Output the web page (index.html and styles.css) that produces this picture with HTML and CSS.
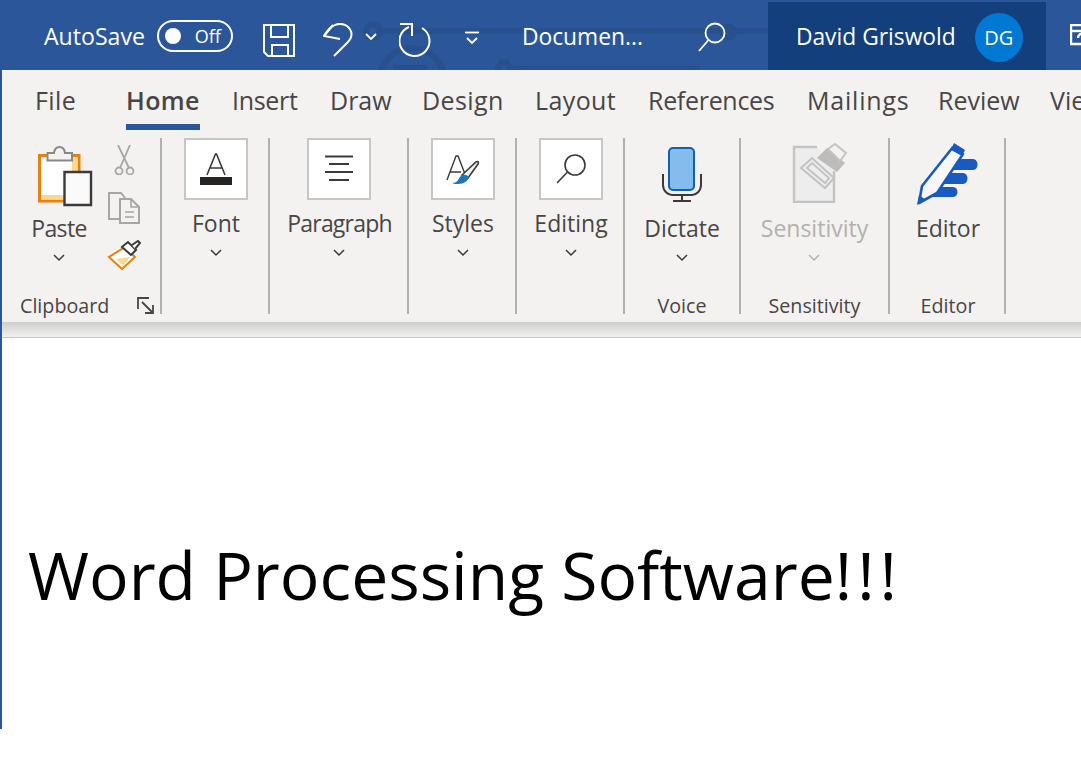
FILE: index.html
```html
<!DOCTYPE html>
<html lang="en">
<head>
    <meta charset="UTF-8">
    <title>Document - Word</title>
    <link rel="stylesheet" href="styles.css">
</head>
<body>

<div class="window">
    <header class="titlebar">
        <!-- faint circuit pattern behind the title bar -->
        <svg class="pattern" width="1081" height="70" viewBox="0 0 1081 70">
            <g fill="none" stroke="#28508f" stroke-width="6">
                <circle cx="373" cy="31" r="7"/>
                <path d="M380 31H768"/>
                <circle cx="728" cy="32" r="6"/>
                <circle cx="412" cy="80" r="32"/>
                <circle cx="504" cy="68" r="6"/>
                <path d="M510 69H700"/>
            </g>
            <path d="M393 65h34v5h-34z" fill="#28508f"/>
        </svg>
        <span class="autosave">AutoSave</span>
        <span class="toggle"><i class="knob"></i>Off</span>
        <svg class="qat qat-save" width="32" height="34" viewBox="0 0 32 34" fill="none" stroke="#fff" stroke-width="2">
            <path d="M1 2H31V33H5L1 29Z"/>
            <path d="M8 2V14H25V2"/>
            <path d="M9 33V22H25V33"/>
        </svg>
        <svg class="qat qat-undo" width="30" height="34" viewBox="0 0 30 34" fill="none" stroke="#fff" stroke-width="2">
            <path d="M10 2L1 13L17 16"/>
            <path d="M1 13C8 0 18 -1 24 3C30 8 30 14 24 20L11 33"/>
        </svg>
        <svg class="chev-sm" width="12" height="8" viewBox="0 0 12 8" fill="none" stroke="#fff" stroke-width="1.8"><path d="M1 1L6 6L11 1"/></svg>
        <svg class="qat qat-redo" width="32" height="34" viewBox="0 0 32 34" fill="none" stroke="#fff" stroke-width="2">
            <path d="M1 1H13V13"/>
            <path d="M10 4A15 15 0 1 0 23 5"/>
        </svg>
        <svg class="qat qat-more" width="14" height="16" viewBox="0 0 14 16" fill="none" stroke="#fff" stroke-width="1.8">
            <path d="M0 1.5H14"/><path d="M2 7L7 12L12 7"/>
        </svg>
        <span class="doc-name">Documen...</span>
        <svg class="qat qat-search" width="28" height="30" viewBox="0 0 28 30" fill="none" stroke="#fff" stroke-width="1.8">
            <circle cx="17" cy="11" r="9.5"/><path d="M10.5 18L1 29"/>
        </svg>
        <div class="account">
            <span class="account-name">David Griswold</span>
            <span class="avatar">DG</span>
        </div>
        <svg class="qat qat-share" width="20" height="22" viewBox="0 0 20 22" fill="none" stroke="#fff" stroke-width="2.4">
            <path d="M20 1H1V20H20"/><path d="M1 7H20"/><path d="M8 14C8 11 10 9 16 9"/>
        </svg>
    </header>

    <section class="ribbon">
        <nav class="tabs">
            <span class="tab-cell"><a class="tab tab-wide">File</a></span>
            <span class="tab-cell"><a class="tab tab-active">Home</a></span>
            <span class="tab-cell"><a class="tab tab-narrow">Insert</a></span>
            <span class="tab-cell"><a class="tab">Draw</a></span>
            <span class="tab-cell"><a class="tab tab-wide">Design</a></span>
            <span class="tab-cell"><a class="tab tab-wide">Layout</a></span>
            <span class="tab-cell"><a class="tab tab-narrow">References</a></span>
            <span class="tab-cell"><a class="tab tab-wider">Mailings</a></span>
            <span class="tab-cell"><a class="tab">Review</a></span>
            <span class="tab-cell"><a class="tab">View</a></span>
        </nav>

        <div class="groups">
            <div class="group group-clipboard">
                <div class="clip-top">
                    <div class="big-btn paste-btn">
                        <div class="icon-slot">
                            <svg class="paste-icon" width="58" height="62" viewBox="0 0 58 62">
                                <path d="M3.5 9.5H43V55H3.5Z" fill="#fff" stroke="#e8800e" stroke-width="3"/>
                                <path d="M36 11H41.500V38H36Z" fill="#fbd88c"/>
                                <path d="M5 49H29V53.500H5Z" fill="#fbd88c"/>
                                <path d="M11.500 14.500V7H18C19 -1 28 -1 29 7H36V14.500Z" fill="#f3f2f1" stroke="#8a8886" stroke-width="2"/>
                                <path d="M28.500 26H55V59H28.500Z" fill="#fafafa" stroke="#3b3a39" stroke-width="2.400"/>
                            </svg>
                        </div>
                        <span class="btn-label label-tight">Paste</span>
                        <svg class="chev" width="12" height="8" viewBox="0 0 12 8"><path d="M1 1L6 6L11 1"/></svg>
                    </div>
                    <div class="clip-side">
                        <svg width="22" height="30" viewBox="0 0 22 30" fill="none" stroke="#a8a6a4" stroke-width="1.800">
                            <path d="M5 0L16 23M17 0L7 23"/>
                            <circle cx="6" cy="26" r="3.500"/><circle cx="17" cy="26" r="3.500"/>
                        </svg>
                        <svg width="34" height="33" viewBox="0 0 34 33" fill="none" stroke="#a8a6a4" stroke-width="2">
                            <path d="M12 28H2V2H14L18 7"/>
                            <path d="M13 8H24L32 16V32H13Z" fill="#f3f2f1"/>
                            <path d="M24 8V16H32" stroke-width="1.600"/>
                            <path d="M18 21H27M18 26H27" stroke-width="1.600"/>
                        </svg>
                        <svg width="34" height="30" viewBox="0 0 34 30">
                            <path d="M2 17L15 29L28 17L18 7Z" fill="#fff" stroke="#e8800e" stroke-width="2"/>
                            <path d="M9 19L23 17L16 26Z" fill="#fbd88c"/>
                            <path d="M15 7L21 2L29 10L24 15Z" fill="#fff" stroke="#3b3a39" stroke-width="2"/>
                            <path d="M25 5L31 1L33 3L28 9" fill="#fff" stroke="#3b3a39" stroke-width="2"/>
                        </svg>
                    </div>
                </div>
                <div class="group-name">Clipboard
                    <svg class="launcher" width="17" height="17" viewBox="0 0 17 17" fill="none" stroke="#484644" stroke-width="1.800">
                        <path d="M1 12V1H12"/><path d="M5 5L15 15M16 8V16H8"/>
                    </svg>
                </div>
            </div>

            <div class="group group-font">
                <div class="collapsed">
                    <span class="tile">
                        <svg width="34" height="34" viewBox="0 0 34 34">
                            <path d="M8 23L16.500 2H17.500L26 23M11 16H23" fill="none" stroke="#3b3a39" stroke-width="1.600"/>
                            <path d="M1 25H33V33H1Z" fill="#252423"/>
                        </svg>
                    </span>
                    <span class="btn-label">Font</span>
                    <svg class="chev" width="12" height="8" viewBox="0 0 12 8"><path d="M1 1L6 6L11 1"/></svg>
                </div>
            </div>

            <div class="group group-paragraph">
                <div class="collapsed">
                    <span class="tile">
                        <svg width="30" height="28" viewBox="0 0 30 28" stroke="#3b3a39" stroke-width="2">
                            <path d="M1 1.500H29M5 9H25M1 17H29M5 25H25"/>
                        </svg>
                    </span>
                    <span class="btn-label label-para">Paragraph</span>
                    <svg class="chev" width="12" height="8" viewBox="0 0 12 8"><path d="M1 1L6 6L11 1"/></svg>
                </div>
            </div>

            <div class="group group-styles">
                <div class="collapsed">
                    <span class="tile">
                        <svg width="34" height="32" viewBox="0 0 34 32">
                            <path d="M1 27L10 3H12L19 21M4 19H15" fill="none" stroke="#3b3a39" stroke-width="1.400"/>
                            <path d="M16 22L30 9C32 8 33 9 32 11L22 25Z" fill="#f3f2f1" stroke="#3b3a39" stroke-width="1.600"/>
                            <path d="M6 30C11 30 12 27 14 24C16 21 20 21 23 24C22 28 18 31 12 31C10 31 8 31 6 30Z" fill="#1b75bc"/>
                        </svg>
                    </span>
                    <span class="btn-label">Styles</span>
                    <svg class="chev" width="12" height="8" viewBox="0 0 12 8"><path d="M1 1L6 6L11 1"/></svg>
                </div>
            </div>

            <div class="group group-editing">
                <div class="collapsed">
                    <span class="tile">
                        <svg width="32" height="32" viewBox="0 0 32 32" fill="none" stroke="#3b3a39" stroke-width="1.600">
                            <circle cx="20" cy="12" r="10"/><path d="M12.500 19L2 30"/>
                        </svg>
                    </span>
                    <span class="btn-label">Editing</span>
                    <svg class="chev" width="12" height="8" viewBox="0 0 12 8"><path d="M1 1L6 6L11 1"/></svg>
                </div>
            </div>

            <div class="group group-voice">
                <div class="big-btn">
                    <div class="icon-slot">
                        <svg class="mic-icon" width="40" height="56" viewBox="0 0 40 56">
                            <rect x="7" y="2" width="25" height="42" rx="4" fill="#85bcee" stroke="#0f62ae" stroke-width="2"/>
                            <path d="M1 28V39C1 45 6 49 10 49H30C34 49 39 45 39 39V28" fill="none" stroke="#3b3a39" stroke-width="2"/>
                            <path d="M20 49V55M11 55H29" fill="none" stroke="#3b3a39" stroke-width="2"/>
                        </svg>
                    </div>
                    <span class="btn-label">Dictate</span>
                    <svg class="chev" width="12" height="8" viewBox="0 0 12 8"><path d="M1 1L6 6L11 1"/></svg>
                </div>
                <div class="group-name">Voice</div>
            </div>

            <div class="group group-sensitivity">
                <div class="big-btn is-disabled">
                    <div class="icon-slot">
                        <svg class="sens-icon" width="56" height="60" viewBox="0 0 56 60">
                            <path d="M25 4H2V59H42V28L25 4Z" fill="#eeeded"/>
                            <path d="M25 4H2V59H42V28" fill="none" stroke="#c4c3c2" stroke-width="2.400"/>
                            <path d="M9 25L20 15L42 35L33 45Z" fill="#eeeded" stroke="#c4c3c2" stroke-width="2"/>
                            <path d="M15 25L20 20L37 35L33 40Z" fill="none" stroke="#c4c3c2" stroke-width="2"/>
                            <path d="M25 15L35 5L53 20L45 29Z" fill="#bdbcbb"/>
                            <path d="M36 6L43 1L54 10L48 18Z" fill="#f3f2f1" stroke="#c4c3c2" stroke-width="2"/>
                        </svg>
                    </div>
                    <span class="btn-label">Sensitivity</span>
                    <svg class="chev" width="12" height="8" viewBox="0 0 12 8"><path d="M1 1L6 6L11 1"/></svg>
                </div>
                <div class="group-name">Sensitivity</div>
            </div>

            <div class="group group-editor">
                <div class="big-btn">
                    <div class="icon-slot">
                        <svg width="62" height="62" viewBox="0 0 62 62">
                            <path d="M30 16H56C62 16 62 27 56 27H30Z" fill="#185abd"/>
                            <path d="M24 30H46C52 30 52 41 46 41H24Z" fill="#185abd"/>
                            <path d="M16 44H36C42 44 42 54 36 54H14Z" fill="#185abd"/>
                            <path d="M36 4L46 11L20 50L2 60L5 43Z" fill="#f7f7f7" stroke="#185abd" stroke-width="2.600" stroke-linejoin="round"/>
                            <path d="M34 7L37 0L48 7L45 13Z" fill="#185abd"/>
                            <path d="M0 62L2 52L9 57Z" fill="#185abd"/>
                        </svg>
                    </div>
                    <span class="btn-label">Editor</span>
                </div>
                <div class="group-name">Editor</div>
            </div>
        </div>
    </section>
    <div class="ribbon-shadow"></div>

    <main class="doc">
        <p>Word Processing Software<span class="bangs">!!!</span></p>
    </main>
</div>

</body>
</html>
```

FILE: styles.css
```css
* {
    box-sizing: border-box;
}
html, body {
    margin: 0;
    height: 100%;
    background-color: white;
    overflow: hidden;
}
body {
    font-family: "Open Sans", "Noto Sans", sans-serif;
    color: #484644;
}
.window {
    width: 1081px;
    height: 729px;
    display: flex;
    flex-direction: column;
    background-color: white;
    border-left: 2px solid #2b579a;
}

/* title bar */
.titlebar {
    height: 70px;
    margin-left: -2px;
    padding-top: 2px;
    position: relative;
    display: flex;
    align-items: center;
    background-color: #2b579a;
    color: white;
    overflow: hidden;
    flex: none;
}
.pattern {
    position: absolute;
    left: 0;
    top: 0;
}
.titlebar > *:not(.pattern) {
    position: relative;
    flex: none;
}
.autosave {
    margin-left: 44px;
    font-size: 23.1px;
}
.toggle {
    margin-left: 12px;
    width: 76px;
    height: 32px;
    border: 2px solid white;
    border-radius: 16px;
    display: flex;
    align-items: center;
    justify-content: space-between;
    padding: 0 10px 0 6px;
    font-size: 18px;
}
.knob {
    width: 16px;
    height: 16px;
    border-radius: 50%;
    background-color: white;
}
.qat-save {
    margin-left: 30px;
    margin-top: 8px;
}
.qat-undo {
    margin-left: 28px;
    margin-top: 8px;
}
.chev-sm {
    margin-left: 12px;
    margin-top: 2px;
}
.qat-redo {
    margin-left: 22px;
    margin-top: 8px;
}
.qat-more {
    margin-left: 34px;
    margin-top: 5px;
}
.doc-name {
    margin-left: 43px;
    font-size: 22.8px;
}
.qat-search {
    margin-left: 55px;
    margin-top: 2px;
}
.account {
    margin-left: 42px;
    width: 278px;
    height: 68px;
    padding-left: 28px;
    display: flex;
    align-items: center;
    background-color: #133f7c;
}
.account-name {
    font-size: 22.8px;
}
.avatar {
    margin-left: 19px;
    margin-top: 2px;
    width: 48px;
    height: 49px;
    border-radius: 50%;
    background-color: #0078d4;
    display: flex;
    align-items: center;
    justify-content: center;
    font-size: 20px;
}
.qat-share {
    margin-left: 24px;
    margin-top: -2px;
}

/* ribbon */
.ribbon {
    height: 252px;
    flex: none;
    background-color: #f3f2f1;
    display: flex;
    flex-direction: column;
}
.tabs {
    height: 68px;
    display: grid;
    grid-template-columns: 92px 105px 98px 92px 113px 113px 159px 131px 112px 100px;
    padding-left: 33px;
    font-size: 25px;
    white-space: nowrap;
}
.tab-cell {
    display: block;
}
.tab {
    display: inline-block;
    padding-top: 13px;
    height: 60px;
}
.tab-active {
    font-weight: 600;
    letter-spacing: 0.4px;
    margin-left: -1px;
    border-bottom: 6px solid #2b579a;
}
.tab-wide {
    letter-spacing: 0.4px;
}
.tab-wider {
    letter-spacing: 0.8px;
}
.tab-narrow {
    letter-spacing: -0.3px;
}
.groups {
    display: flex;
    height: 176px;
}
.group {
    flex: none;
    position: relative;
    border-right: 2px solid #b3b0ad;
    display: flex;
    flex-direction: column;
    align-items: center;
    justify-content: space-between;
    color: #484644;
}
.group-clipboard { width: 160px; }
.group-font { width: 108px; padding-left: 2px; }
.group-paragraph { width: 139px; padding-left: 2px; }
.group-styles { width: 108px; padding-left: 2px; }
.group-editing { width: 108px; padding-left: 2px; }
.group-voice { width: 116px; }
.group-sensitivity { width: 149px; }
.group-editor { width: 116px; padding-left: 2px; }

.clip-top {
    display: flex;
    width: 100%;
    padding-left: 26px;
}
.big-btn, .collapsed {
    display: flex;
    flex-direction: column;
    align-items: center;
    font-size: 23px;
}
.big-btn {
    padding-top: 5px;
}
.paste-btn {
    width: 62px;
}
.icon-slot {
    height: 70px;
    display: flex;
    justify-content: center;
    align-items: flex-start;
}
.paste-btn .icon-slot {
    width: 62px;
    justify-content: flex-start;
}
.paste-icon {
    margin-left: 8px;
    margin-top: 3px;
    flex: none;
}
.mic-icon {
    margin-top: 3px;
}
.sens-icon {
    margin-left: 12px;
}
.btn-label {
    line-height: 30px;
}
.label-tight {
    letter-spacing: -0.6px;
}
.label-para {
    letter-spacing: -0.8px;
}
.chev {
    margin-top: 11px;
    fill: none;
    stroke: #3b3a39;
    stroke-width: 1.5;
}
.clip-side {
    margin-left: 17px;
    display: flex;
    flex-direction: column;
    align-items: center;
    gap: 16px;
    padding-top: 7px;
}
.tile {
    width: 64px;
    height: 62px;
    border: 2px solid #c8c6c4;
    background-color: white;
    display: flex;
    align-items: center;
    justify-content: center;
}
.collapsed .btn-label {
    margin-top: 8px;
}
.is-disabled, .is-disabled .btn-label {
    color: #b3b0ad;
}
.is-disabled .chev {
    stroke: #b3b0ad;
}
.group-name {
    font-size: 19.7px;
    line-height: 16px;
    width: 100%;
    text-align: center;
}
.group-clipboard .group-name {
    text-align: left;
    padding-left: 18px;
}
.launcher {
    position: absolute;
    right: 6px;
    bottom: 0;
}
.ribbon-shadow {
    height: 16px;
    flex: none;
    background: linear-gradient(#cfcecd, #f1f1f1);
    border-bottom: 1px solid #c8c6c4;
}

/* document */
.doc {
    flex: 1;
    padding: 196px 0 0 26px;
    color: black;
}
.doc p {
    margin: 0;
    font-size: 66px;
    line-height: 80px;
    white-space: nowrap;
}
.bangs {
    letter-spacing: 5px;
}
```
